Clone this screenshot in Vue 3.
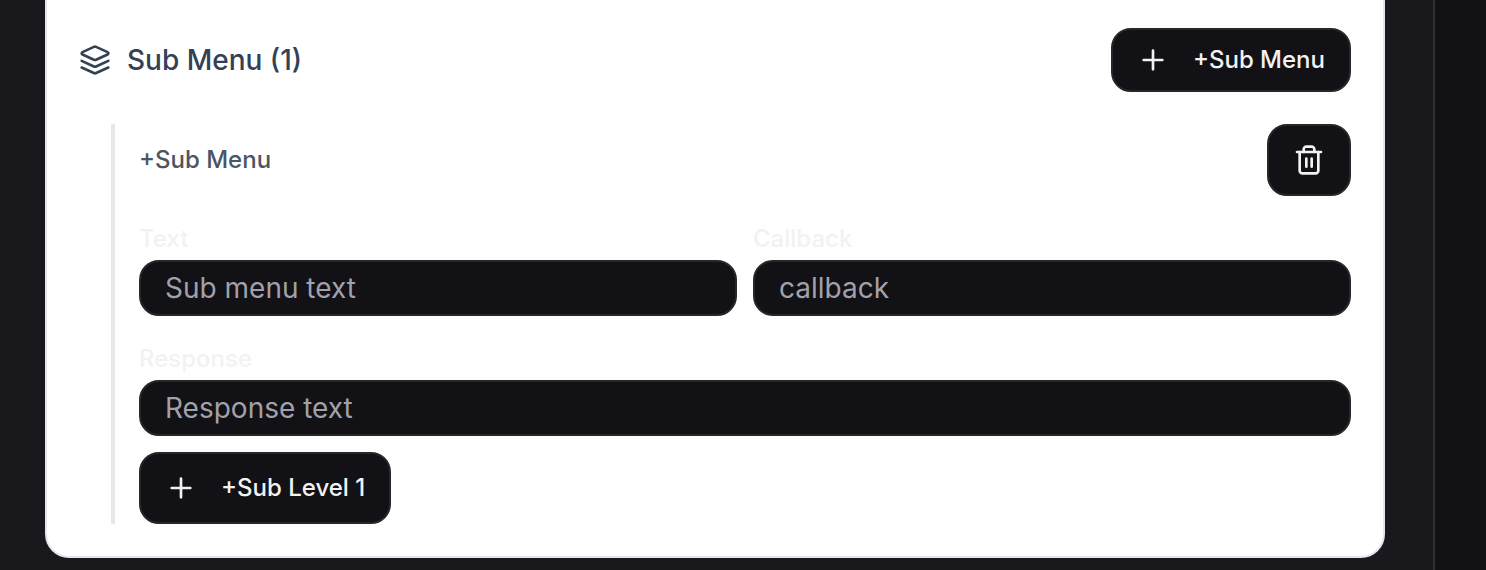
<script setup>
import { ref } from 'vue'

const text = ref('')
const callback = ref('')
const response = ref('')
</script>

<template>
  <div class="page">
    <main class="content">
      <section class="card">
        <header class="row">
          <h2 class="title">
            <svg class="icon" viewBox="0 0 24 24" aria-hidden="true">
              <path d="m12.83 2.18a2 2 0 0 0-1.66 0L2.6 6.08a1 1 0 0 0 0 1.83l8.58 3.91a2 2 0 0 0 1.66 0l8.58-3.9a1 1 0 0 0 0-1.83Z" />
              <path d="m22 12.65-9.17 4.16a2 2 0 0 1-1.66 0L2 12.65" />
              <path d="m22 17.65-9.17 4.16a2 2 0 0 1-1.66 0L2 17.65" />
            </svg>
            Sub Menu (1)
          </h2>
          <button class="button" type="button">
            <svg class="icon lead" viewBox="0 0 24 24" aria-hidden="true"><path d="M5 12h14M12 5v14" /></svg>
            +Sub Menu
          </button>
        </header>

        <div class="nested">
          <div class="row">
            <h3 class="subtitle">+Sub Menu</h3>
            <button class="button tall" type="button" aria-label="Delete">
              <svg class="icon" viewBox="0 0 24 24" aria-hidden="true">
                <path d="M3 6h18" />
                <path d="M19 6v14c0 1-1 2-2 2H7c-1 0-2-1-2-2V6" />
                <path d="M8 6V4c0-1 1-2 2-2h4c1 0 2 1 2 2v2" />
                <path d="M10 11v6M14 11v6" />
              </svg>
            </button>
          </div>

          <div class="fields">
            <div class="field">
              <label for="text">Text</label>
              <input id="text" v-model="text" type="text" placeholder="Sub menu text" />
            </div>
            <div class="field">
              <label for="callback">Callback</label>
              <input id="callback" v-model="callback" type="text" placeholder="callback" />
            </div>
          </div>

          <div class="field">
            <label for="response">Response</label>
            <input id="response" v-model="response" type="text" placeholder="Response text" />
          </div>

          <button class="button tall" type="button">
            <svg class="icon lead" viewBox="0 0 24 24" aria-hidden="true"><path d="M5 12h14M12 5v14" /></svg>
            +Sub Level 1
          </button>
        </div>
      </section>
    </main>
    <aside class="side"></aside>
  </div>
</template>

<style>
body {
  margin: 0;
  background: #19181d;
}
</style>

<style scoped>
.page {
  display: flex;
  min-height: 100vh;
  box-sizing: border-box;
  font-family: Inter, "Liberation Sans", sans-serif;
  font-size: 32px;
  line-height: 48px;
  background: #19181d;
}

.content {
  flex: 1;
  min-width: 0;
  padding: 0 48px 12px 45px;
}

.side {
  width: 51px;
  flex: none;
  border-left: 2px solid #303035;
  background: #121116;
}

.card {
  padding: 28px 32px 32px;
  border: 2px solid #e2e8f0;
  border-top: 0;
  border-radius: 0 0 24px 24px;
  background: #fff;
}

.row {
  display: flex;
  align-items: center;
  justify-content: space-between;
}

.title {
  display: flex;
  align-items: center;
  gap: 16px;
  margin: 0;
  font-size: 28px;
  line-height: 40px;
  font-weight: 500;
  color: #334155;
}

.subtitle {
  margin: 0;
  font-size: 24px;
  line-height: 32px;
  font-weight: 500;
  color: #4b5563;
}

.icon {
  width: 32px;
  height: 32px;
  flex: none;
  fill: none;
  stroke: currentColor;
  stroke-width: 2;
  stroke-linecap: round;
  stroke-linejoin: round;
}

.button {
  display: inline-flex;
  align-items: center;
  justify-content: center;
  gap: 16px;
  height: 64px;
  padding: 0 24px;
  border: 2px solid #27272a;
  border-radius: 20px;
  background: #121116;
  color: #f2f2f2;
  font-family: inherit;
  font-size: 24px;
  line-height: 32px;
  font-weight: 500;
  white-space: nowrap;
  cursor: pointer;
}

.tall {
  height: 72px;
}

.lead {
  margin-right: 8px;
}

.nested {
  display: flex;
  flex-direction: column;
  align-items: flex-start;
  gap: 16px;
  margin: 32px 0 0 32px;
  padding-left: 24px;
  border-left: 4px solid #e5e7eb;
}

.nested > .row,
.nested > .field,
.fields {
  width: 100%;
}

.fields {
  display: grid;
  grid-template-columns: 1fr 1fr;
  gap: 16px;
}

label {
  font-size: 24px;
  line-height: 24px;
  font-weight: 500;
  color: #f2f2f2;
}

input {
  display: block;
  width: 100%;
  height: 56px;
  box-sizing: border-box;
  padding: 0 24px;
  border: 2px solid #27272a;
  border-radius: 20px;
  outline: none;
  background: #121116;
  color: #f2f2f2;
  font-family: inherit;
  font-size: 28px;
}

input::placeholder {
  color: #a1a1aa;
  opacity: 1;
}
</style>
